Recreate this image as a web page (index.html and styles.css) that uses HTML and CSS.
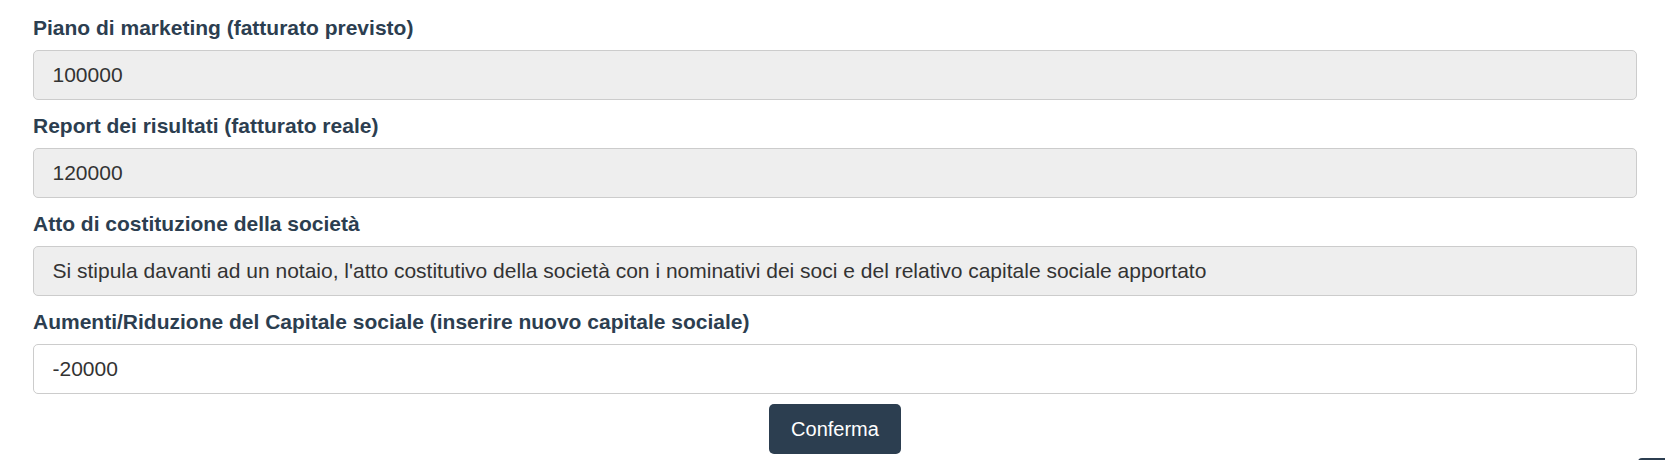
FILE: index.html
```html
<!DOCTYPE html>
<html lang="it">
<head>
<meta charset="utf-8">
<title>Modulo</title>
<link rel="stylesheet" href="styles.css">
</head>
<body>
<form class="form">
  <div class="group">
    <label class="label">Piano di marketing (fatturato previsto)</label>
    <input class="field readonly" type="text" value="100000" readonly>
  </div>
  <div class="group">
    <label class="label">Report dei risultati (fatturato reale)</label>
    <input class="field readonly" type="text" value="120000" readonly>
  </div>
  <div class="group">
    <label class="label">Atto di costituzione della società</label>
    <input class="field readonly" type="text" value="Si stipula davanti ad un notaio, l'atto costitutivo della società con i nominativi dei soci e del relativo capitale sociale apportato" readonly>
  </div>
  <div class="group last">
    <label class="label">Aumenti/Riduzione del Capitale sociale (inserire nuovo capitale sociale)</label>
    <input class="field" type="text" value="-20000">
  </div>
  <div class="actions">
    <button class="btn" type="button">Conferma</button>
  </div>
</form>
<div class="to-top"></div>
</body>
</html>
```

FILE: styles.css
```css
html, body {
  margin: 0;
  padding: 0;
  background: #fff;
}
body {
  font-family: "Liberation Sans", Arial, sans-serif;
  font-size: 21px;
  color: #333;
  overflow: hidden;
}
.form {
  display: flex;
  flex-direction: column;
  padding: 15px 28px 0 33px;
}
.group {
  display: flex;
  flex-direction: column;
  margin-bottom: 13px;
}
.group.last {
  margin-bottom: 10px;
}
.label {
  display: block;
  font-weight: bold;
  line-height: 25px;
  margin-bottom: 10px;
  color: #2c3e50;
}
.field {
  box-sizing: border-box;
  height: 50px;
  width: 100%;
  padding: 0 18.5px;
  border: 1px solid #ccc;
  border-radius: 5px;
  font-family: inherit;
  font-size: 21px;
  color: #333;
  background: #fff;
  outline: none;
}
.field.readonly {
  background: #eee;
}
.actions {
  display: flex;
  justify-content: center;
}
.btn {
  box-sizing: border-box;
  width: 132px;
  height: 50px;
  border: none;
  border-radius: 5px;
  background: #2c3e50;
  color: #fff;
  font-family: inherit;
  font-size: 20px;
  padding: 0;
}
.to-top {
  position: fixed;
  left: 1638px;
  top: 458px;
  width: 40px;
  height: 40px;
  border-radius: 4px;
  background: #2c3e50;
}
```
